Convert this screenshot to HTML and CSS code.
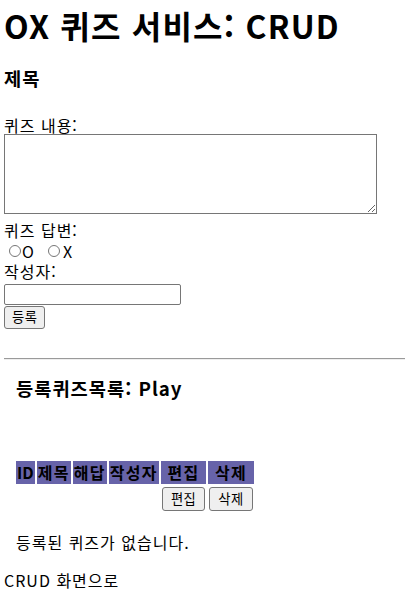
FILE: index.html
```html
<!DOCTYPE html>
<html lang="ko">
<head>
  <meta charset="UTF-8" />
  <meta name="viewport" content="width=device-width, initial-scale=1.0" />
  <title>OX 퀴즈 서비스: CRUD</title>
  <link rel="stylesheet" href="styles.css">
</head>
<body>
  <h1>OX 퀴즈 서비스: CRUD</h1>

  <form class="quiz-form" onsubmit="return false">
    <h3>제목</h3>
    <label for="content">퀴즈 내용:</label>
    <textarea id="content"></textarea>
    <label>퀴즈 답변:</label>
    <div class="answers">
      <label><input type="radio" name="answer" value="O" />O</label>
      <label><input type="radio" name="answer" value="X" />X</label>
    </div>
    <label for="writer">작성자:</label>
    <input type="text" id="writer" class="writer" />
    <div><button type="submit">등록</button></div>
  </form>

  <hr />

  <div class="quiz-list">
    <h3>등록퀴즈목록: Play</h3>
    <table>
      <thead>
        <tr>
          <th class="id">ID</th>
          <th>제목</th>
          <th>해답</th>
          <th>작성자</th>
          <th>편집</th>
          <th>삭제</th>
        </tr>
      </thead>
      <tbody>
        <tr>
          <td></td>
          <td></td>
          <td></td>
          <td></td>
          <td><button>편집</button></td>
          <td><button>삭제</button></td>
        </tr>
      </tbody>
    </table>
    <p class="empty">등록된 퀴즈가 없습니다.</p>
  </div>

  <div class="back">CRUD 화면으로</div>
</body>
</html>
```

FILE: styles.css
```css
body {
  margin: 0 0 0 4px;
  font-family: "Noto Sans CJK KR", "Noto Sans", sans-serif;
  font-size: 16px;
  line-height: 21px;
  letter-spacing: 1px;
  color: #000;
  background: #fff;
}

h1 {
  font-size: 32px;
  line-height: 42px;
  letter-spacing: 1.2px;
  margin: 4px 0 0;
}

h3 {
  font-size: 18.7px;
  line-height: 25px;
  margin: 0;
}

.quiz-form h3 {
  margin: 19px 0 25px;
}

.quiz-form label {
  display: block;
}

.quiz-form textarea {
  display: block;
  box-sizing: border-box;
  width: 373px;
  height: 80px;
  margin: -2px 0 6px;
  border: 1px solid #767676;
  resize: vertical;
}

.answers {
  display: flex;
  height: 20px;
  align-items: center;
}

.answers label {
  display: flex;
  align-items: center;
  line-height: 18px;
  margin-right: 8px;
}

.answers input {
  width: 12px;
  height: 12px;
  margin: 0 1px 0 5px;
}

.answers label + label input {
  margin-right: 3px;
}

.writer {
  display: block;
  box-sizing: border-box;
  width: 177px;
  height: 21px;
  margin: 2px 0 0;
  border: 1px solid #767676;
  border-radius: 2px;
}

button {
  font-family: "Noto Sans CJK KR", sans-serif;
  font-size: 13.3px;
  line-height: 16px;
  letter-spacing: 0.5px;
  height: 23px;
  padding: 1px 7px;
  background: #efefef;
  border: 1px solid #767676;
  border-radius: 3px;
  color: #000;
}

td button {
  height: 24px;
  padding: 1px 8px;
}

hr {
  margin: 29px 0 0;
  border: none;
  border-top: 1px solid #9a9a9a;
  border-bottom: 1px solid #eee;
}

.quiz-list {
  padding-left: 12px;
}

.quiz-list h3 {
  margin: 15px 0 59px;
}

table {
  border-spacing: 2px;
  margin-left: -2px;
}

th {
  background: #6763a9;
  font-weight: bold;
  line-height: 21px;
  letter-spacing: 1.3px;
  padding: 1px;
}

th.id {
  letter-spacing: 0;
}

td {
  padding: 1px;
}

.empty {
  margin: 18px 0 0;
}

.back {
  margin-top: 17px;
}
```
